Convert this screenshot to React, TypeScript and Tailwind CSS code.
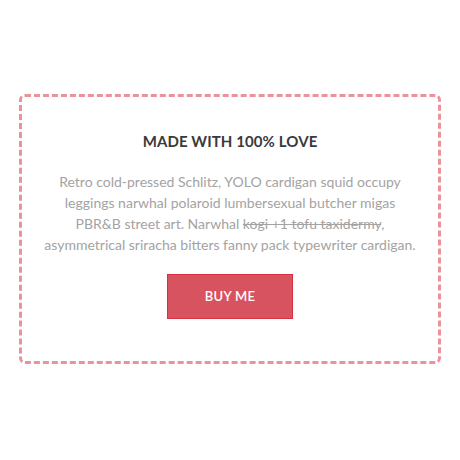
export default function App() {
  return (
    <div className="w-[460px] h-[460px] bg-white flex items-start justify-center pt-[94px]" style={{ fontFamily: "Lato, 'Open Sans', sans-serif" }}>
      <div className="w-[422px] h-[270px] border-[3px] border-dashed border-[#ea939c] rounded-[6px] flex flex-col items-center pt-[32px]">
        <h2 className="text-[15px] font-bold text-[#3a3a3a] tracking-[0.1px] leading-[24px]">MADE WITH 100% LOVE</h2>
        <p className="mt-[18px] w-[390px] text-center text-[14px] leading-[21px] text-[#a3a3a3]">
          Retro cold-pressed Schlitz, YOLO cardigan squid occupy<br />
          leggings narwhal polaroid lumbersexual butcher migas<br />
          PBR&amp;B street art. Narwhal <span className="line-through">kogi +1 tofu taxidermy</span>,<br />
          asymmetrical sriracha bitters fanny pack typewriter cardigan.
        </p>
        <button className="mt-[19px] w-[126px] h-[45px] bg-[#d75360] border border-[#d8303f] text-white text-[13px] font-semibold tracking-[0.3px]">BUY ME</button>
      </div>
    </div>
  );
}
